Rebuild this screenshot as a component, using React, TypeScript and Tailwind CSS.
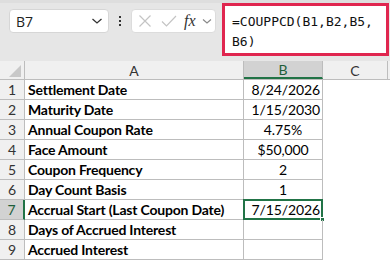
import React from "react";

const rows: { a: string; b: string; align: "right" | "center" }[] = [
  { a: "Settlement Date", b: "8/24/2026", align: "right" },
  { a: "Maturity Date", b: "1/15/2030", align: "right" },
  { a: "Annual Coupon Rate", b: "4.75%", align: "center" },
  { a: "Face Amount", b: "$50,000", align: "center" },
  { a: "Coupon Frequency", b: "2", align: "center" },
  { a: "Day Count Basis", b: "1", align: "center" },
  { a: "Accrual Start (Last Coupon Date)", b: "7/15/2026", align: "right" },
  { a: "Days of Accrued Interest", b: "", align: "right" },
  { a: "Accrued Interest", b: "", align: "right" },
];

const cellFont = { fontFamily: "Lato, 'Liberation Sans', sans-serif" };

export default function App() {
  return (
    <div className="w-[390px] h-[262px] overflow-hidden bg-white relative" style={cellFont}>
      {/* toolbar */}
      <div className="h-[61px] bg-[#e6e6e6] relative">
        <div className="h-[3px] bg-[#dedede]" />
        <div className="flex items-start pt-[6px] pl-[9px]">
          {/* name box */}
          <div className="w-[100px] h-[24px] bg-white rounded-[4px] border border-[#d6d6d6] flex items-center justify-between pl-[6px] pr-[5px]">
            <span className="text-[14px] text-[#222]" style={{ fontFamily: "'Segoe UI', 'Open Sans', sans-serif" }}>B7</span>
            <svg width="12" height="8" viewBox="0 0 12 8">
              <path d="M1.5 2 L6 6 L10.5 2" fill="none" stroke="#333" strokeWidth="1.3" />
            </svg>
          </div>
          {/* dots */}
          <div className="w-[22px] h-[24px] flex flex-col items-center justify-center gap-[2px]">
            <div className="w-[2px] h-[2px] bg-[#333]" />
            <div className="w-[2px] h-[2px] bg-[#333]" />
            <div className="w-[2px] h-[2px] bg-[#333]" />
          </div>
          {/* formula icons box */}
          <div className="w-[85px] h-[24px] bg-white rounded-[4px] border border-[#dcdcdc] flex items-center pl-[5px]">
            <svg width="14" height="14" viewBox="0 0 14 14" className="ml-[1px]">
              <path d="M1.5 1.5 L12.5 12.5 M12.5 1.5 L1.5 12.5" stroke="#c4c4c4" strokeWidth="1.2" fill="none" />
            </svg>
            <svg width="16" height="14" viewBox="0 0 16 14" className="ml-[9px]">
              <path d="M1 7.5 L5.5 12 L15 2" stroke="#c4c4c4" strokeWidth="1.2" fill="none" />
            </svg>
            <span className="ml-[7px] text-[16px] italic text-[#333] leading-none" style={{ fontFamily: "'Liberation Serif', serif" }}>fx</span>
            <svg width="10" height="7" viewBox="0 0 10 7" className="ml-[6px]">
              <path d="M1 1.5 L5 5 L9 1.5" fill="none" stroke="#888" strokeWidth="1.1" />
            </svg>
          </div>
        </div>
        {/* formula edit box with red highlight */}
        <div className="absolute left-[222px] top-[3px] w-[167px] h-[53px] border-[3px] border-[#e0264f] bg-white pl-[7px] pt-[6px]">
          <div className="text-[13px] leading-[20px] text-[#111]" style={{ fontFamily: "'DejaVu Sans Mono', 'Liberation Mono', monospace" }}>
            =COUPPCD(B1,B2,B5,
            <br />
            B6)
          </div>
        </div>
      </div>

      {/* grid */}
      <div className="flex flex-col">
        {/* header row */}
        <div className="flex h-[19px] bg-[#f0f0f0] border-b border-[#bdbdbd]">
          <div className="w-[25px] border-r border-[#bdbdbd] relative">
            <svg width="12" height="12" viewBox="0 0 12 12" className="absolute right-[3px] bottom-[2px]">
              <path d="M12 0 L12 12 L0 12 Z" fill="#c8c8c8" />
            </svg>
          </div>
          <div className="w-[219px] border-r border-[#bdbdbd] flex items-center justify-center text-[14px] text-[#333]">A</div>
          <div className="w-[79px] border-r border-[#bdbdbd] bg-[#d2d2d2] border-b-2 border-b-[#217346] flex items-center justify-center text-[14px] text-[#1e5e3a]">B</div>
          <div className="w-[65px] border-r border-[#bdbdbd] flex items-center justify-center text-[14px] text-[#333]">C</div>
        </div>
        {rows.map((r, i) => {
          const sel = i === 6;
          return (
            <div key={i} className="flex h-[20px]">
              <div
                className={
                  sel
                    ? "w-[25px] bg-[#d2d2d2] border-r-2 border-r-[#217346] border-b border-b-[#bdbdbd] flex items-center justify-center text-[14px] text-[#1e5e3a]"
                    : "w-[25px] bg-[#f0f0f0] border-r border-[#bdbdbd] border-b border-b-[#bdbdbd] flex items-center justify-center text-[14px] text-[#333]"
                }
              >
                {i + 1}
              </div>
              <div className="w-[219px] border-r border-b border-[#bdbdbd] flex items-center pl-[3px] text-[14px] tracking-[-0.2px] font-bold text-[#000] whitespace-nowrap">
                {r.a}
              </div>
              <div
                className={
                  "w-[79px] border-r border-b border-[#bdbdbd] flex items-center text-[14px] tracking-[-0.1px] text-[#000] relative " +
                  (r.align === "right" ? "justify-end pr-[2px]" : "justify-center")
                }
              >
                {r.b}
                {sel && (
                  <>
                    <div className="absolute left-[-1px] top-[-1px] right-[-1px] bottom-[-1px] border-2 border-[#217346]" />
                    <div className="absolute right-[-3px] bottom-[-3px] w-[5px] h-[5px] bg-[#217346] border border-white" />
                  </>
                )}
              </div>
              <div className="w-[65px]" />
            </div>
          );
        })}
      </div>
    </div>
  );
}
